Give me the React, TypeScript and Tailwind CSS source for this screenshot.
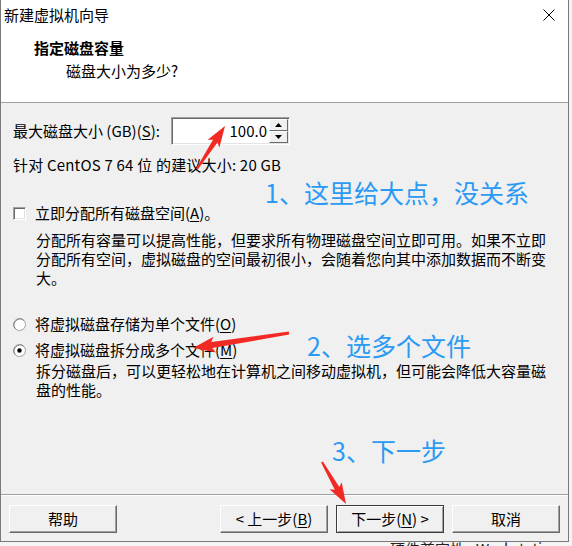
import React from 'react';

type Pt = [number, number];

// tapered red arrow, like a screenshot tool draws it
function arrowPoints(tail: Pt, tip: Pt, head = 18, headW = 8, shaftW = 3, tailW = 1): string {
  const dx = tip[0] - tail[0];
  const dy = tip[1] - tail[1];
  const len = Math.hypot(dx, dy);
  const ux = dx / len;
  const uy = dy / len;
  const nx = -uy;
  const ny = ux;
  const bx = tip[0] - ux * head;
  const by = tip[1] - uy * head;
  const pts: Pt[] = [
    [tail[0] + nx * tailW, tail[1] + ny * tailW],
    [bx + nx * shaftW, by + ny * shaftW],
    [bx - ux * 3 + nx * headW, by - uy * 3 + ny * headW],
    tip,
    [bx - ux * 3 - nx * headW, by - uy * 3 - ny * headW],
    [bx - nx * shaftW, by - ny * shaftW],
    [tail[0] - nx * tailW, tail[1] - ny * tailW],
  ];
  return pts.map((p) => `${p[0].toFixed(1)},${p[1].toFixed(1)}`).join(' ');
}

function U({ c }: { c: string }) {
  return <span className="underline decoration-1 underline-offset-[2px]">{c}</span>;
}

function WinButton({ children, focused = false }: { children: React.ReactNode; focused?: boolean }) {
  if (focused) {
    return (
      <div className="w-[108px] h-[28px] flex items-center justify-center text-[15px] bg-[#f0f0f0] border border-[#3c3c3c] shadow-[inset_1px_1px_0_#ffffff,inset_-1px_-1px_0_#a0a0a0]">
        {children}
      </div>
    );
  }
  return (
    <div className="w-[108px] h-[28px] flex items-center justify-center text-[15px] bg-[#f0f0f0] border border-t-white border-l-white border-r-[#696969] border-b-[#696969] shadow-[inset_-1px_-1px_0_#a0a0a0]">
      {children}
    </div>
  );
}

function SpinBtn({ up }: { up: boolean }) {
  return (
    <div className="flex-1 flex items-center justify-center bg-[#f0f0f0] border border-t-white border-l-white border-r-[#696969] border-b-[#696969]">
      <svg width="7" height="4" viewBox="0 0 7 4">
        {up ? <polygon points="3.5,0 7,4 0,4" fill="#000" /> : <polygon points="0,0 7,0 3.5,4" fill="#000" />}
      </svg>
    </div>
  );
}

function Radio({ checked }: { checked: boolean }) {
  return (
    <svg width="13" height="13" viewBox="0 0 13 13" className="shrink-0">
      <circle cx="6.5" cy="6.5" r="6" fill="#ffffff" stroke="#a0a0a0" />
      <path d="M2.3 10.7 A6 6 0 0 1 10.7 2.3" fill="none" stroke="#7a7a7a" />
      {checked && <circle cx="6.5" cy="6.5" r="2.2" fill="#000" />}
    </svg>
  );
}

export default function App() {
  return (
    <div className="w-[572px] h-[546px] overflow-hidden bg-[#f4f4f4] relative font-['Noto_Sans_CJK_SC',sans-serif] text-black">
      <div className="w-[569px] h-[542px] border-l border-r border-b border-[#7a7a7a] flex flex-col bg-[#f0f0f0]">
        {/* title bar */}
        <div className="h-[30px] shrink-0 bg-white flex items-center justify-between pl-[3px] pr-[13px]">
          <span className="text-[15px] leading-[20px]">新建虚拟机向导</span>
          <svg width="12" height="12" viewBox="0 0 12 12">
            <path d="M0.5 0.5 L11.5 11.5 M11.5 0.5 L0.5 11.5" stroke="#000" strokeWidth="1" />
          </svg>
        </div>

        {/* header */}
        <div className="h-[72px] shrink-0 bg-white pl-[33px] pt-[8px]">
          <div className="text-[15px] leading-[20px] font-bold">指定磁盘容量</div>
          <div className="text-[15px] leading-[20px] mt-[3px] pl-[32px]">磁盘大小为多少?</div>
        </div>
        <div className="h-px shrink-0 bg-[#a0a0a0]" />

        {/* body */}
        <div className="flex-1 pl-[12px] text-[15px]">
          <div className="flex items-center mt-[14px]">
            <span className="w-[158px] leading-[20px]">
              最大磁盘大小 (GB)(<U c="S" />):
            </span>
            <div className="w-[119px] h-[28px] flex p-[1px] bg-white border border-t-[#a0a0a0] border-l-[#a0a0a0] border-r-white border-b-white shadow-[inset_1px_1px_0_#696969,inset_-1px_-1px_0_#e3e3e3]">
              <div className="flex-1 flex items-center justify-end pr-[2px] leading-[20px]">100.0</div>
              <div className="w-[19px] flex flex-col">
                <SpinBtn up />
                <SpinBtn up={false} />
              </div>
            </div>
          </div>

          <div className="mt-[10px] leading-[20px] tracking-[0.2px]">针对 CentOS 7 64 位 的建议大小: 20 GB</div>

          <div className="mt-[28px] flex items-center gap-[9px] leading-[20px]">
            <div className="w-[13px] h-[13px] shrink-0 bg-white border border-t-[#a0a0a0] border-l-[#a0a0a0] border-r-white border-b-white shadow-[inset_1px_1px_0_#696969,inset_-1px_-1px_0_#e3e3e3]" />
            <span>
              立即分配所有磁盘空间(<U c="A" />)。
            </span>
          </div>
          <p className="mt-[7px] pl-[23px] leading-[19px] whitespace-nowrap">
            分配所有容量可以提高性能，但要求所有物理磁盘空间立即可用。如果不立即
            <br />
            分配所有空间，虚拟磁盘的空间最初很小，会随着您向其中添加数据而不断变
            <br />
            大。
          </p>

          <div className="mt-[27px] flex items-center gap-[9px] leading-[20px]">
            <Radio checked={false} />
            <span>
              将虚拟磁盘存储为单个文件(<U c="O" />)
            </span>
          </div>
          <div className="mt-[6px] flex items-center gap-[9px] leading-[20px]">
            <Radio checked />
            <span>
              将虚拟磁盘拆分成多个文件(<U c="M" />)
            </span>
          </div>
          <p className="mt-[1px] pl-[23px] leading-[19px] whitespace-nowrap">
            拆分磁盘后，可以更轻松地在计算机之间移动虚拟机，但可能会降低大容量磁
            <br />
            盘的性能。
          </p>
        </div>

        <div className="h-px shrink-0 bg-[#a0a0a0]" />
        <div className="h-px shrink-0 bg-white" />

        {/* footer */}
        <div className="h-[45px] shrink-0 flex items-start pt-[9px] pl-[8px] pr-[8px]">
          <WinButton>帮助</WinButton>
          <div className="flex-1" />
          <div className="flex gap-[8px]">
            <WinButton>
              &lt; 上一步(<U c="B" />)
            </WinButton>
            <WinButton focused>
              下一步(<U c="N" />) &gt;
            </WinButton>
            <WinButton>取消</WinButton>
          </div>
        </div>
      </div>

      {/* window behind, only the top of its text shows */}
      <div className="pl-[390px] text-[15px] leading-[14px] text-[#222] whitespace-nowrap">硬件兼容性:&nbsp;&nbsp;Workstation</div>

      {/* annotations drawn over the screenshot */}
      <span className="absolute left-[265px] top-[176px] text-[25px] leading-[32px] text-[#2b9af3] whitespace-nowrap">
        1、这里给大点，没关系
      </span>
      <span className="absolute left-[307px] top-[329px] text-[25px] leading-[32px] text-[#2b9af3] whitespace-nowrap">
        2、选多个文件
      </span>
      <span className="absolute left-[332px] top-[434px] text-[25px] leading-[32px] text-[#2b9af3] whitespace-nowrap">
        3、下一步
      </span>
      <svg className="absolute left-0 top-0 pointer-events-none" width="572" height="546" viewBox="0 0 572 546">
        <polygon points={arrowPoints([197, 169], [225, 126], 18, 7, 2.6, 1)} fill="#f22a25" />
        <polygon points={arrowPoints([289, 333], [193, 348], 19, 8, 3, 1.6)} fill="#f22a25" />
        <polygon points={arrowPoints([322, 462], [346, 504], 18, 7, 2.6, 1)} fill="#f22a25" />
      </svg>
    </div>
  );
}
